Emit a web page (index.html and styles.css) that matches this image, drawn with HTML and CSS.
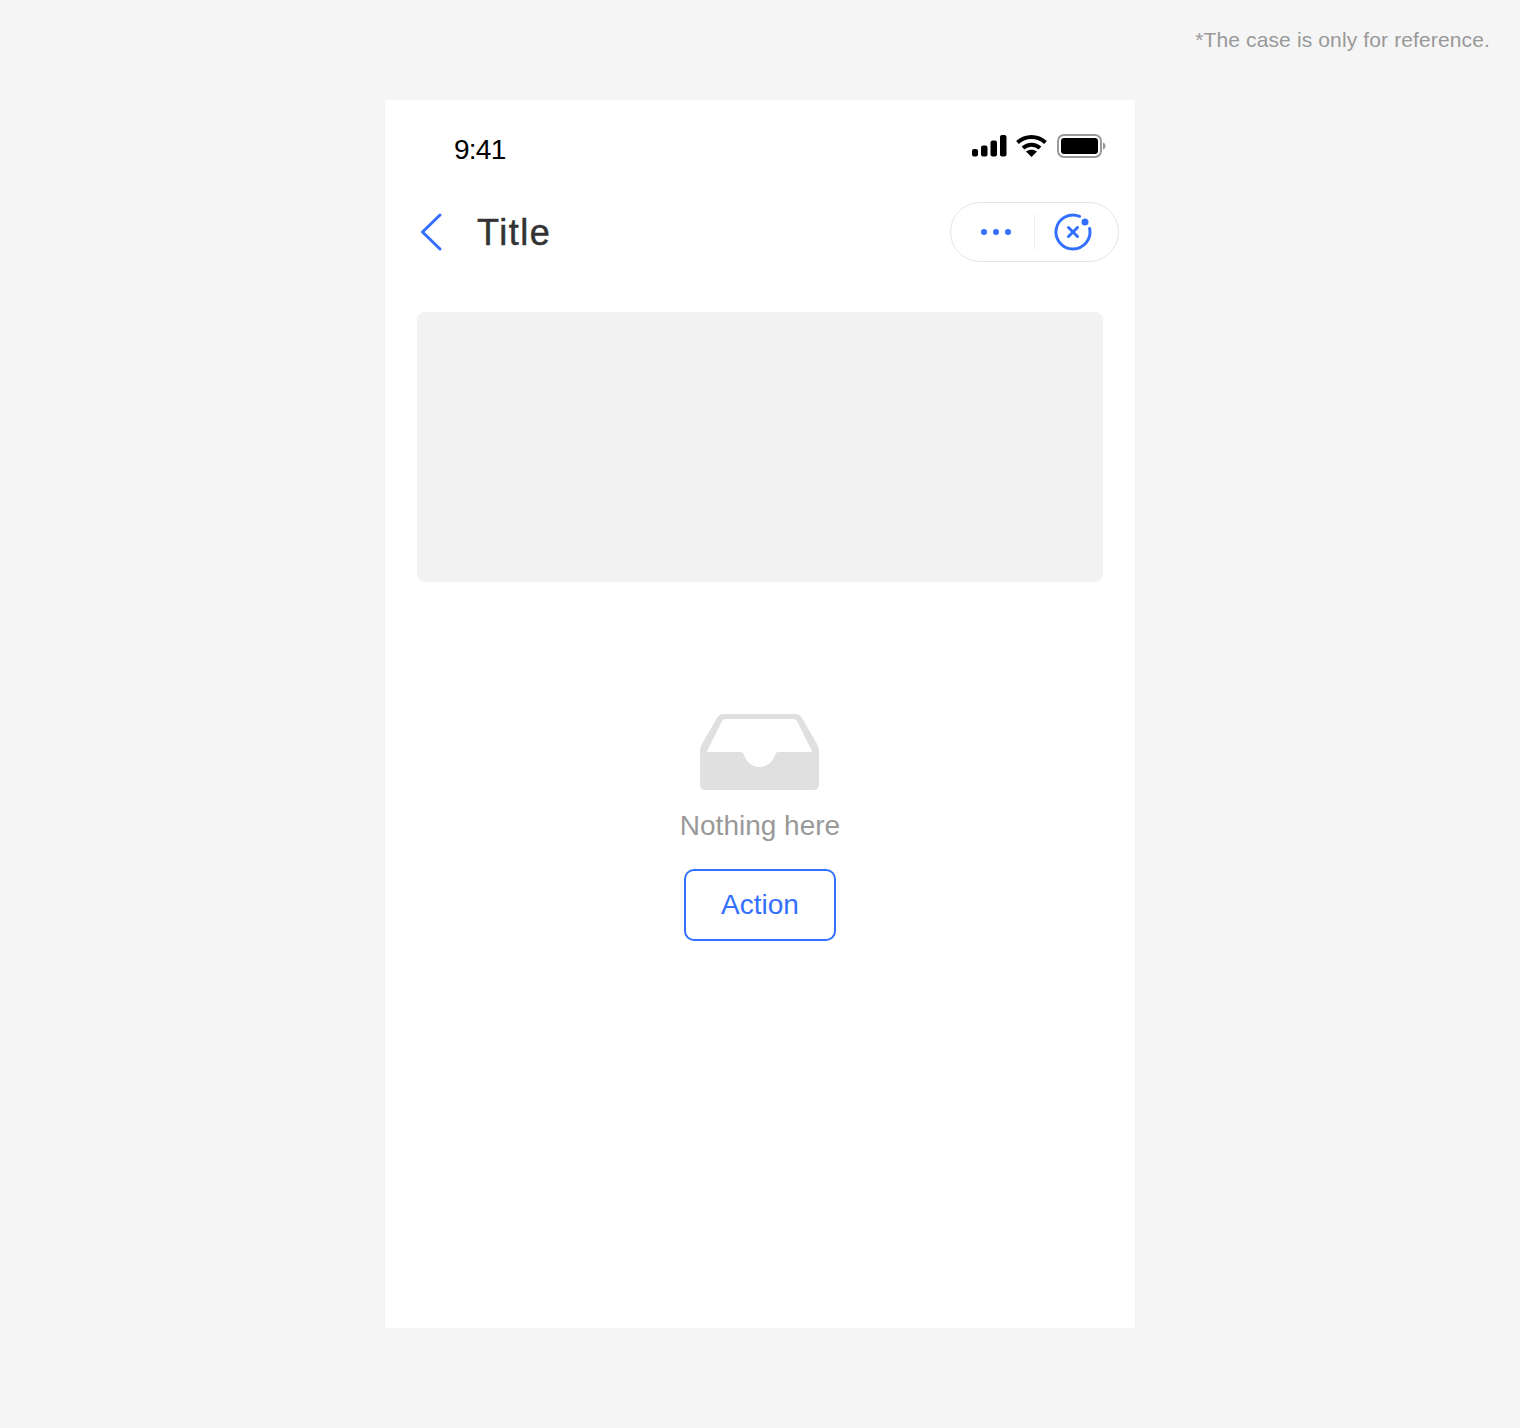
FILE: index.html
```html
<!DOCTYPE html>
<html lang="en">
  <head>
    <meta charset="UTF-8" />
    <meta name="viewport" content="width=device-width, initial-scale=1.0" />
    <title>Empty state</title>
    <link rel="stylesheet" href="styles.css">
  </head>
  <body>
    <p class="note">*The case is only for reference.</p>
    <div class="phone">
      <div class="status-bar">
        <span class="time">9:41</span>
        <div class="status-icons">
          <svg width="37" height="23" viewBox="0 0 37 23">
            <rect x="1" y="15" width="6" height="7.500" rx="2" fill="#000" />
            <rect x="10" y="11.500" width="6.500" height="11" rx="2" fill="#000" />
            <rect x="19.500" y="6.500" width="6.500" height="16" rx="2" fill="#000" />
            <rect x="29" y="1" width="6.500" height="21.500" rx="2" fill="#000" />
          </svg>
          <svg width="33" height="24" viewBox="0 0 33 24">
            <path d="M1.500 8.500 C9.500 1 21.500 1 29.500 8.500" fill="none" stroke="#000" stroke-width="4" />
            <path d="M7 14 C12 9.500 19 9.500 24 14" fill="none" stroke="#000" stroke-width="4" />
            <path d="M10 17.500 C13.500 15 17.500 15 21 17.500 L15.500 23 Z" fill="#000" />
          </svg>
          <svg width="49" height="24" viewBox="0 0 49 24">
            <rect x="1" y="1" width="43" height="22" rx="6" fill="none" stroke="#9a9a9a" stroke-width="2" />
            <rect x="4" y="4" width="37" height="16" rx="3" fill="#000" />
            <path d="M46 8.500 C47.500 9 48.500 10.300 48.500 12 C48.500 13.700 47.500 15 46 15.500 Z" fill="#9a9a9a" />
          </svg>
        </div>
      </div>
      <div class="nav-bar">
        <svg class="back" width="24" height="40" viewBox="0 0 24 40">
          <path d="M20 3 L2.500 20 L20 37" fill="none" stroke="#3370ff" stroke-width="3" stroke-linecap="round" stroke-linejoin="round" />
        </svg>
        <h1 class="title">Title</h1>
        <div class="capsule">
          <div class="capsule-btn more">
            <i></i><i></i><i></i>
          </div>
          <div class="capsule-btn close">
            <svg width="40" height="40" viewBox="0 0 40 40">
              <path d="M26.500 4.300 A17 17 0 1 0 36.600 16.500" fill="none" stroke="#3370ff" stroke-width="3" stroke-linecap="round" />
              <circle cx="32" cy="10" r="3.500" fill="#3370ff" />
              <path d="M15.500 15.500 L24.500 24.500 M24.500 15.500 L15.500 24.500" stroke="#3370ff" stroke-width="3" stroke-linecap="round" />
            </svg>
          </div>
        </div>
      </div>
      <div class="placeholder"></div>
      <div class="empty">
        <svg class="empty-icon" width="120" height="76" viewBox="0 0 120 76">
          <path fill="#e0e0e0" fill-rule="evenodd" d="M24 0 H95 C98.500 0 100.600 1.400 102.200 4.200 L116.500 29 C118.200 32 119 34.500 119 37 V71 C119 73.800 116.800 76 114 76 H5 C2.200 76 0 73.800 0 71 V37 C0 34.500 .8 32 2.500 29 L16.800 4.200 C18.400 1.400 20.500 0 24 0 Z M25.500 5 C23.800 5 22.800 5.700 22 7 L6.700 38 H40 C42.500 38 43.500 39 44.300 41.500 C46.200 48 52.500 53 59.500 53 C66.500 53 72.800 48 74.700 41.500 C75.500 39 76.500 38 79 38 H112.300 L97 7 C96.200 5.700 95.200 5 93.500 5 Z" />
        </svg>
        <p class="empty-text">Nothing here</p>
        <button class="action">Action</button>
      </div>
    </div>
  </body>
</html>
```

FILE: styles.css
```css
body {
  margin: 0;
  background-color: #f5f5f5;
  font-family: "Liberation Sans", Arial, sans-serif;
  height: 1428px;
  overflow: hidden;
}
.note {
  margin: 0;
  height: 100px;
  box-sizing: border-box;
  padding: 27px 30px 0 0;
  text-align: right;
  font-size: 21px;
  line-height: 26px;
  color: #999;
  letter-spacing: 0.13px;
}
.phone {
  width: 750px;
  height: 1228px;
  margin: 0 auto;
  background-color: #fff;
}
.status-bar {
  height: 88px;
  box-sizing: border-box;
  padding: 35px 29px 0 69px;
  display: flex;
  justify-content: space-between;
  align-items: flex-start;
}
.time {
  font-size: 28px;
  line-height: 30px;
  letter-spacing: -0.75px;
  color: #000;
}
.status-icons {
  display: flex;
  align-items: flex-start;
  gap: 8px;
  margin-top: -1px;
}
.nav-bar {
  height: 88px;
  padding: 0 16px 0 35px;
  display: flex;
  align-items: center;
}
.back {
  flex: none;
}
.title {
  flex: 1;
  margin: 2px 0 0 33px;
  font-size: 36px;
  font-weight: 400;
  letter-spacing: 1.5px;
  color: #333;
  -webkit-text-stroke: 0.5px #333;
}
.capsule {
  width: 169px;
  height: 60px;
  box-sizing: border-box;
  border: 1px solid #e5e5e5;
  border-radius: 30px;
  display: flex;
  align-items: center;
}
.capsule-btn {
  box-sizing: border-box;
  height: 36px;
  display: flex;
  align-items: center;
  justify-content: center;
}
.more {
  width: 84px;
  gap: 6px;
  padding-left: 7px;
  border-right: 1px solid #eee;
}
.more i {
  width: 6px;
  height: 6px;
  border-radius: 50%;
  background-color: #3370ff;
}
.close {
  width: 83px;
  padding-right: 7px;
}
.placeholder {
  height: 270px;
  margin: 36px 32px 0;
  background-color: #f2f2f2;
  border-radius: 8px;
}
.empty {
  padding-top: 132px;
  display: flex;
  flex-direction: column;
  align-items: center;
}
.empty-text {
  margin: 18px 0 0;
  font-size: 28px;
  line-height: 36px;
  color: #999;
}
.action {
  width: 152px;
  height: 72px;
  margin-top: 25px;
  background-color: #fff;
  border: 2px solid #3370ff;
  border-radius: 10px;
  font-family: inherit;
  font-size: 28px;
  color: #3370ff;
}
```
